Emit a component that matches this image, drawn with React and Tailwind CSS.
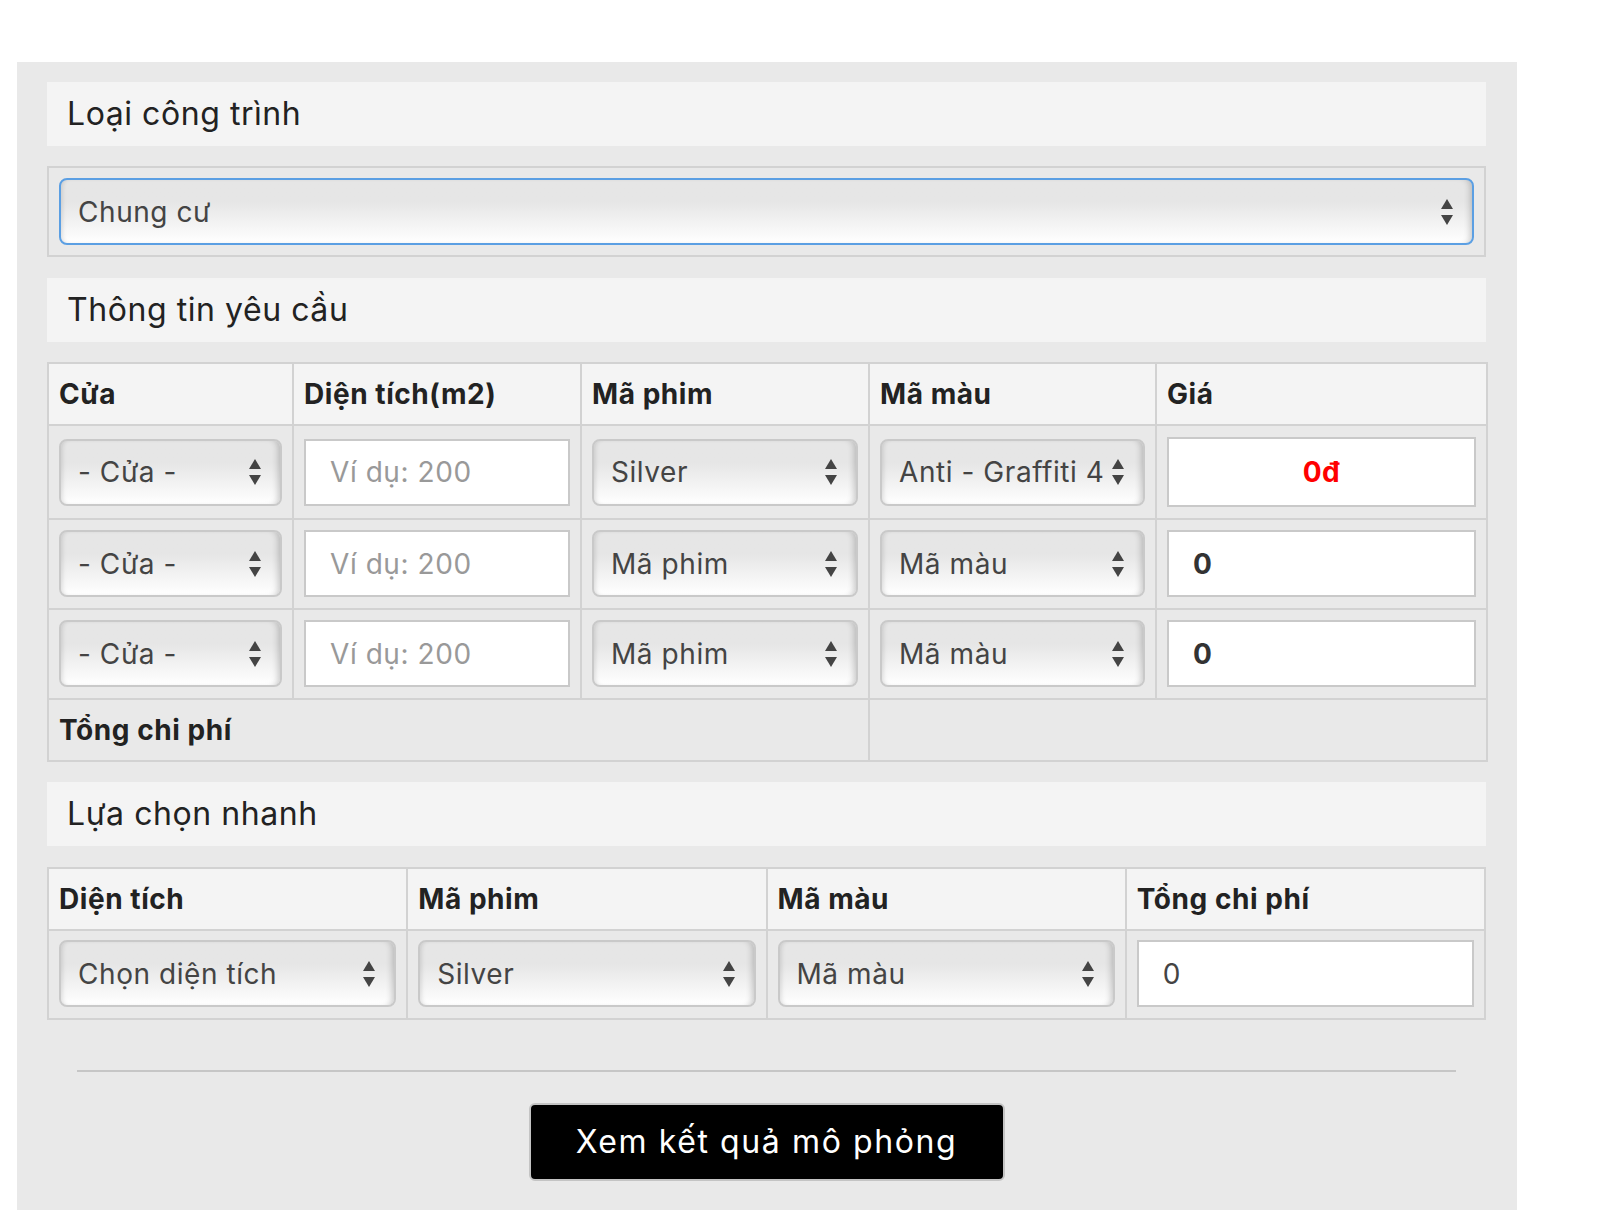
const sans = "font-['Inter','Noto_Sans',sans-serif] tracking-[0.035em]"

function Arrows() {
  return (
    <svg width="12" height="26" viewBox="0 0 12 26" className="shrink-0">
      <path d="M6 0 L12 10 L0 10 Z" fill="#444" />
      <path d="M0 16 L12 16 L6 26 Z" fill="#444" />
    </svg>
  )
}

function Select({ value, focus }) {
  return (
    <div className={`flex items-center h-[67px] pl-[17px] pr-[19px] gap-2 rounded-[8px] border-2 ${focus ? 'border-[#5b9fe3]' : 'border-[#c9c9c9]'} bg-linear-to-b from-[#e6e6e6] from-35% to-white shadow-[inset_5px_0_5px_-4px_rgba(0,0,0,0.14),inset_-6px_0_6px_-4px_rgba(0,0,0,0.2)] text-[28px] text-[#444]`}>
      <span className="flex-1 min-w-0 overflow-hidden whitespace-nowrap">{value}</span>
      <Arrows />
    </div>
  )
}

function Field({ children, className = '' }) {
  return (
    <div className={`flex items-center h-[67px] px-[24px] border-2 border-[#c9c9c9] bg-white text-[28px] ${className}`}>
      {children}
    </div>
  )
}

function SectionTitle({ children }) {
  return (
    <div className="h-[64px] bg-[#f4f4f4] pl-[20px] flex items-center text-[32px] text-[#222]">
      {children}
    </div>
  )
}

const th = 'border-2 border-[#d2d2d2] bg-[#f4f4f4] h-[62px] px-[10px] text-left text-[28px] font-bold text-[#222]'
const td = 'border-2 border-[#d2d2d2] px-[10px]'

const rows = [
  { film: 'Silver', color: 'Anti - Graffiti 40', price: '0đ', first: true },
  { film: 'Mã phim', color: 'Mã màu', price: '0' },
  { film: 'Mã phim', color: 'Mã màu', price: '0' },
]

export default function App() {
  return (
    <div className={`min-h-screen bg-white ${sans}`}>
      <div className="ml-[17px] mt-[62px] w-[1500px] bg-[#e9e9e9] pl-[30px] pr-[31px] pt-[20px] pb-[40px]">
        <SectionTitle>Loại công trình</SectionTitle>
        <div className="mt-[20px] border-2 border-[#d2d2d2] p-[10px]">
          <Select value="Chung cư" focus />
        </div>

        <div className="mt-[21px]">
          <SectionTitle>Thông tin yêu cầu</SectionTitle>
        </div>

        <table className="mt-[20px] w-full table-fixed border-collapse">
          <colgroup>
            <col className="w-[245px]" />
            <col className="w-[288px]" />
            <col className="w-[288px]" />
            <col className="w-[287px]" />
            <col className="w-[331px]" />
          </colgroup>
          <thead>
            <tr>
              <th className={th}>Cửa</th>
              <th className={th}>Diện tích(m2)</th>
              <th className={th}>Mã phim</th>
              <th className={th}>Mã màu</th>
              <th className={th}>Giá</th>
            </tr>
          </thead>
          <tbody>
            {rows.map((r, i) => {
              const cell = `${td} ${r.first ? 'py-[11px]' : 'pt-[10px] pb-[11px]'}`
              return (
                <tr key={i}>
                  <td className={cell}><Select value="- Cửa -" /></td>
                  <td className={cell}>
                    <Field className="text-[#999]">Ví dụ: 200</Field>
                  </td>
                  <td className={cell}><Select value={r.film} /></td>
                  <td className={cell}><Select value={r.color} /></td>
                  <td className={cell}>
                    {r.first ? (
                      <Field className="h-[70px] justify-center font-bold text-[#f00]">{r.price}</Field>
                    ) : (
                      <Field className="font-bold text-[#333]">{r.price}</Field>
                    )}
                  </td>
                </tr>
              )
            })}
            <tr>
              <td colSpan={3} className="border-2 border-[#d2d2d2] h-[62px] px-[10px] text-[28px] font-bold text-[#222]">Tổng chi phí</td>
              <td colSpan={2} className="border-2 border-[#d2d2d2]"></td>
            </tr>
          </tbody>
        </table>

        <div className="mt-[20px]">
          <SectionTitle>Lựa chọn nhanh</SectionTitle>
        </div>

        <table className="mt-[21px] w-full table-fixed border-collapse">
          <thead>
            <tr>
              <th className={th}>Diện tích</th>
              <th className={th}>Mã phim</th>
              <th className={th}>Mã màu</th>
              <th className={th}>Tổng chi phí</th>
            </tr>
          </thead>
          <tbody>
            <tr>
              <td className={`${td} pt-[9px] pb-[11px]`}><Select value="Chọn diện tích" /></td>
              <td className={`${td} pt-[9px] pb-[11px]`}><Select value="Silver" /></td>
              <td className={`${td} pt-[9px] pb-[11px]`}><Select value="Mã màu" /></td>
              <td className={`${td} pt-[9px] pb-[11px]`}>
                <Field className="text-[#444]">0</Field>
              </td>
            </tr>
          </tbody>
        </table>

        <div className="mt-[50px] mx-[30px] border-t-2 border-[#c6c6c6]" />

        <div className="mt-[31px] flex justify-center">
          <button className="w-[476px] h-[78px] rounded-[6px] border-2 border-[#c4c4c4] bg-black text-white text-[32px] tracking-[0.05em]">
            Xem kết quả mô phỏng
          </button>
        </div>
      </div>
    </div>
  )
}
